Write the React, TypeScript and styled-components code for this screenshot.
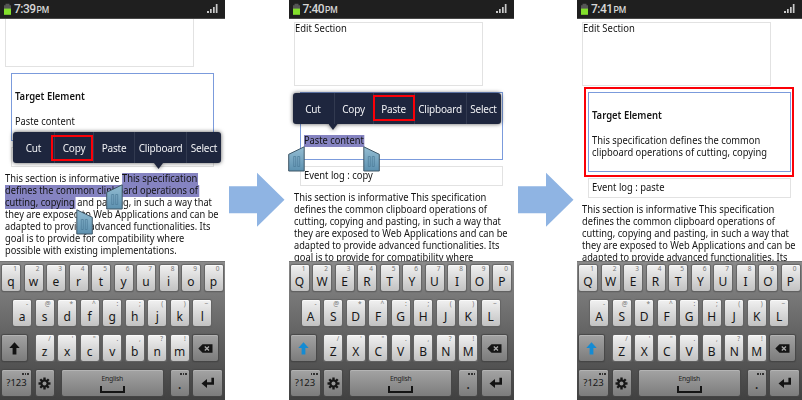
import React from 'react';
import styled, { createGlobalStyle, css } from 'styled-components';

const GlobalStyle = createGlobalStyle`
  * { box-sizing: border-box; }
  body {
    margin: 0;
    background: #fff;
    overflow: hidden;
    font-family: "Noto Sans", "Open Sans", sans-serif;
  }
`;

const Board = styled.main`
  display: flex;
  justify-content: space-between;
  width: 802px;
  height: 400px;
`;

const PhoneFrame = styled.section`
  position: relative;
  display: flex;
  flex-direction: column;
  width: 225px;
  height: 400px;
  flex: none;
`;

const StatusBar = styled.header`
  display: flex;
  align-items: center;
  height: 19px;
  flex: none;
  padding: 0 7px 0 4px;
  background: #1f1f1f;
  border-bottom: 1px solid #484848;
`;

const Clock = styled.span`
  display: flex;
  align-items: baseline;
  margin-left: 3px;
  color: #d6d6d6;
  font: 500 12px/16px "Roboto", sans-serif;
  letter-spacing: -0.55px;
  flex: 1;
  small {
    font-size: 8.5px;
    line-height: 12px;
    letter-spacing: 0;
    margin-left: 1px;
  }
`;

const Page = styled.div`
  height: 242px;
  flex: none;
  overflow: hidden;
  background: #fff;
  font-size: 10px;
  line-height: 11.9px;
  color: #141414;
`;

const PageFlow = styled.div<{ $scroll: number }>`
  display: flex;
  flex-direction: column;
  gap: 6px;
  padding: 3px 0 0 5px;
  margin-top: ${(p) => -p.$scroll}px;
`;

const Line = styled.div<{ $bold?: boolean; $stretch?: number }>`
  width: max-content;
  white-space: pre;
  transform: scaleX(${(p) => p.$stretch ?? 0.928});
  transform-origin: 0 50%;
  font-weight: ${(p) => (p.$bold ? 600 : 400)};
`;

const Marked = styled.span`
  display: inline-block;
  height: 12px;
  padding-right: 1px;
  margin-right: -1px;
  vertical-align: top;
  background: #8583c1;
`;

const EditBox = styled.div`
  width: 189px;
  height: 64px;
  border: 1px solid #e2e2e2;
`;

const TargetBox = styled.div<{ $height: number }>`
  width: 203px;
  height: ${(p) => p.$height}px;
  margin-left: 6px;
  padding: 17px 0 0 3px;
  border: 1px solid #7b9bdc;
`;

const TargetBody = styled.div`
  margin-top: 13px;
`;

const LogBox = styled.div`
  width: 203px;
  height: 20px;
  margin-left: 6px;
  padding: 3px 0 0 3px;
  border: 1px solid #e2e2e2;
`;

const MenuWrap = styled.div<{ $x: number; $y: number }>`
  position: absolute;
  left: ${(p) => p.$x}px;
  top: ${(p) => p.$y}px;
  filter: drop-shadow(0 0 2px rgba(0, 0, 0, 0.65));
`;

const Menu = styled.div`
  display: flex;
  width: 208px;
  height: 31px;
  border-radius: 3px;
  background: #1e263e;
`;

const MenuItem = styled.div<{ $width: number }>`
  display: flex;
  justify-content: center;
  align-items: center;
  width: ${(p) => p.$width}px;
  flex: none;
  color: #f0f1f4;
  font-size: 10px;
  line-height: 14px;
  letter-spacing: -0.2px;
  & + & { border-left: 1px solid #323a50; }
`;

const MenuTip = styled.i<{ $x: number }>`
  display: block;
  width: 9px;
  height: 6px;
  margin-left: ${(p) => p.$x}px;
  background: #1e263e;
  clip-path: polygon(0 0, 100% 0, 50% 100%);
`;

const RedFrame = styled.div<{ $x: number; $y: number; $w: number; $h: number }>`
  position: absolute;
  left: ${(p) => p.$x}px;
  top: ${(p) => p.$y}px;
  width: ${(p) => p.$w}px;
  height: ${(p) => p.$h}px;
  border: 2px solid #fb0007;
`;

const HandleSvg = styled.svg<{ $x: number; $y: number; $flip?: boolean }>`
  position: absolute;
  left: ${(p) => p.$x}px;
  top: ${(p) => p.$y}px;
  transform: ${(p) => (p.$flip ? 'scaleX(-1)' : 'none')};
`;

const ArrowSvg = styled.svg`
  flex: none;
  margin: 172px 3px 0 4px;
`;

const Keyboard = styled.div`
  display: flex;
  flex-direction: column;
  gap: 9px;
  height: 139px;
  padding: 3px 2px 0;
  border-top: 1px solid #747474;
  background: linear-gradient(#8b8b8b, #666 48%, #414141);
`;

const KeyRow = styled.div<{ $indent?: number }>`
  display: flex;
  padding-left: ${(p) => p.$indent ?? 0}px;
`;

const KeyCap = styled.div<{ $width?: number; $gap?: number; $dark?: boolean }>`
  position: relative;
  display: flex;
  align-items: center;
  justify-content: center;
  width: ${(p) => p.$width ?? 18}px;
  height: 26px;
  flex: none;
  margin-right: ${(p) => p.$gap ?? 4.5}px;
  border-radius: 2px;
  color: #171717;
  ${(p) =>
    p.$dark
      ? css`
          background: linear-gradient(#a3a3a3, #7c7c7c);
          box-shadow: 0 0 1px 0.5px #484848, 0 1px 1px #333, inset 0 1px 0 #b4b4b4;
        `
      : css`
          background: linear-gradient(#f1f1f1, #c2c2c2);
          box-shadow: 0 0 1px 0.5px #646464, 0 1px 1px #454545, inset 0 1px 0 #fafafa;
        `}
`;

const Glyph = styled.span<{ $size?: number; $drop?: number }>`
  font-size: ${(p) => p.$size ?? 12}px;
  line-height: 14px;
  padding-top: ${(p) => p.$drop ?? 7}px;
`;

const Hint = styled.span`
  position: absolute;
  top: 0;
  right: 3px;
  font-size: 6.5px;
  line-height: 8px;
  color: #777;
`;

const Dots = styled.span`
  position: absolute;
  top: 3px;
  right: 2px;
  display: flex;
  gap: 1px;
  i { width: 1.6px; height: 1.5px; background: #303030; }
`;

const SpaceFace = styled.div`
  display: flex;
  flex-direction: column;
  align-items: center;
  font-size: 6.8px;
  line-height: 8px;
  letter-spacing: -0.25px;
  color: #252525;
  gap: 3px;
  padding-top: 1px;
`;

const SpaceMark = styled.i`
  width: 25px;
  height: 7px;
  border: 2px solid #141414;
  border-top: 0;
`;

const Battery = () => (
  <svg width="7" height="13" viewBox="0 0 7 13">
    <path d="M1.5 .7h4v1.6H7v4H0v-4h1.5z" fill="#555" />
    <rect y="5.6" width="7" height="6.2" fill="#83e02c" />
  </svg>
);

const Signal = () => (
  <svg width="11" height="10" viewBox="0 0 11 10">
    <g fill="#c9c9c9">
      <rect x="0" y="7" width="2" height="2" />
      <rect x="3" y="5" width="1.7" height="4" />
      <rect x="6" y="3" width="1.7" height="6" />
      <rect x="8.8" y="0" width="1.7" height="9" />
    </g>
  </svg>
);

const ShiftIcon = ({ active }: { active: boolean }) => (
  <svg width="11" height="13" viewBox="0 0 11 13">
    <path d="M5.5 .3 10.7 6H7.4v6.5H3.6V6H.3z" fill={active ? '#148bd3' : '#131313'} />
  </svg>
);

const DeleteIcon = () => (
  <svg width="15" height="9" viewBox="0 0 15 9">
    <path d="M.3 4.5 4.5.3H14.5V8.7H4.5z" fill="#151515" />
    <path d="m6.8 2.5 4.2 4m0-4-4.2 4" stroke="#aaa" strokeWidth="1.3" />
  </svg>
);

const GearIcon = () => (
  <svg width="13" height="13" viewBox="-6.5 -6.5 13 13">
    {[0, 45, 90, 135].map((a) => (
      <rect key={a} x="-1.2" y="-6" width="2.4" height="12" transform={`rotate(${a})`} fill="#171717" />
    ))}
    <circle r="4.1" fill="#171717" />
    <circle r="2" fill="#969696" />
  </svg>
);

const EnterIcon = () => (
  <svg width="14" height="12" viewBox="0 0 14 12">
    <path d="M10.4.8H13v7H6v3.1L.5 6.5 6 2.1v3.2h4.4z" fill="#131313" />
  </svg>
);

const Handle = ({ x, y, flip }: { x: number; y: number; flip?: boolean }) => (
  <HandleSvg $x={x} $y={y} $flip={flip} width="17" height="26" viewBox="0 0 17 26">
    <defs>
      <linearGradient id="handle" x1="0" y1="0" x2="0" y2="1">
        <stop offset="0" stopColor="#94bdd3" />
        <stop offset="1" stopColor="#5d91b0" />
      </linearGradient>
    </defs>
    <path d="M.7 8.3 16.2.8V25H.7z" fill="url(#handle)" stroke="#3f5666" />
    <path d="M5.7 10.5h2v10h-2zM9.7 10.5h2v10h-2z" fill="none" stroke="#4c7b98" strokeWidth=".7" />
  </HandleSvg>
);

const StepArrow = () => (
  <ArrowSvg width="56" height="56" viewBox="0 0 56 56">
    <path d="M0 14.2h28V.8l27.5 27L28 54.8V41.2H0z" fill="#8fb4e3" />
  </ArrowSvg>
);

type Letter = [string, string];
const zip = (letters: string, hints: string): Letter[] =>
  letters.split('').map((l, i) => [l, hints[i]]);

const ROW_TOP = zip('qwertyuiop', '1234567890');
const ROW_MID = zip('asdfghjkl', '-@*^:;()~');
const ROW_LOW = zip('zxcvbnm', "/'\".,?!");

const Letters = ({ row, upper }: { row: Letter[]; upper: boolean }) => (
  <>
    {row.map(([letter, hint]) => (
      <KeyCap key={letter}>
        <Hint>{hint}</Hint>
        <Glyph>{upper ? letter.toUpperCase() : letter}</Glyph>
      </KeyCap>
    ))}
  </>
);

const MoreDots = () => (
  <Dots>
    <i />
    <i />
    <i />
  </Dots>
);

const Keys = ({ upper }: { upper: boolean }) => (
  <Keyboard>
    <KeyRow>
      <Letters row={ROW_TOP} upper={upper} />
    </KeyRow>
    <KeyRow $indent={11.2}>
      <Letters row={ROW_MID} upper={upper} />
    </KeyRow>
    <KeyRow>
      <KeyCap $dark $width={25} $gap={8.7}>
        <ShiftIcon active={upper} />
      </KeyCap>
      <Letters row={ROW_LOW} upper={upper} />
      <KeyCap $dark $width={25} $gap={0}>
        <DeleteIcon />
      </KeyCap>
    </KeyRow>
    <KeyRow>
      <KeyCap $dark $width={29} $gap={4.7}>
        <MoreDots />
        <Glyph $size={9.5} $drop={0}>?123</Glyph>
      </KeyCap>
      <KeyCap $dark $gap={8}>
        <GearIcon />
      </KeyCap>
      <KeyCap $dark $width={101} $gap={8}>
        <SpaceFace>
          English
          <SpaceMark />
        </SpaceFace>
      </KeyCap>
      <KeyCap $dark>
        <MoreDots />
        <Glyph $size={14} $drop={2}>.</Glyph>
      </KeyCap>
      <KeyCap $dark $width={29} $gap={0}>
        <EnterIcon />
      </KeyCap>
    </KeyRow>
  </Keyboard>
);

const MENU: [string, number][] = [
  ['Cut', 41],
  ['Copy', 39],
  ['Paste', 41],
  ['Clipboard', 52],
  ['Select', 35],
];

const EditMenu = ({ x, y, tip }: { x: number; y: number; tip: number }) => (
  <MenuWrap $x={x} $y={y}>
    <Menu>
      {MENU.map(([label, width]) => (
        <MenuItem key={label} $width={width}>
          {label}
        </MenuItem>
      ))}
    </Menu>
    <MenuTip $x={tip} />
  </MenuWrap>
);

interface PhoneProps {
  time: string;
  scroll?: number;
  upper?: boolean;
  targetHeight?: number;
  target: React.ReactNode;
  log?: string;
  selected?: boolean;
  children?: React.ReactNode;
}

const Phone = ({ time, scroll = 0, upper = true, targetHeight = 68, target, log, selected, children }: PhoneProps) => {
  const mark = (text: string) => (selected ? <Marked>{text}</Marked> : text);
  return (
    <PhoneFrame>
      <StatusBar>
        <Battery />
        <Clock>
          {time}
          <small>PM</small>
        </Clock>
        <Signal />
      </StatusBar>
      <Page>
        <PageFlow $scroll={scroll}>
          <EditBox>
            <Line $stretch={0.945}>Edit Section</Line>
          </EditBox>
          <TargetBox $height={targetHeight}>
            <Line $bold $stretch={0.945}>Target Element</Line>
            <TargetBody>{target}</TargetBody>
          </TargetBox>
          {log ? (
            <LogBox>
              <Line $stretch={0.94}>{log}</Line>
            </LogBox>
          ) : (
            <LogBox />
          )}
          <div>
            <Line $stretch={0.937}>This section is informative {mark('This specification')}</Line>
            <Line $stretch={0.925}>{mark('defines the common clipboard operations of')}</Line>
            <Line>{mark('cutting, copying')} and pasting, in such a way that</Line>
            <Line>they are exposed to Web Applications and can be</Line>
            <Line $stretch={0.921}>adapted to provide advanced functionalities. Its</Line>
            <Line $stretch={0.934}>goal is to provide for compatibility where</Line>
            <Line $stretch={0.923}>possible with existing implementations.</Line>
          </div>
        </PageFlow>
      </Page>
      <Keys upper={upper} />
      {children}
    </PhoneFrame>
  );
};

export default function App() {
  return (
    <>
      <GlobalStyle />
      <Board>
        <Phone time="7:39" scroll={19} upper={false} selected target={<Line>Paste content</Line>}>
          <EditMenu x={13} y={132} tip={141} />
          <RedFrame $x={51} $y={135} $w={42} $h={26} />
          <Handle x={106} y={184} />
          <Handle x={75.5} y={208.5} flip />
        </Phone>
        <StepArrow />
        <Phone time="7:40" target={<Line><Marked>Paste content</Marked></Line>} log="Event log : copy">
          <EditMenu x={4} y={93} tip={36} />
          <RedFrame $x={84} $y={95} $w={42} $h={26} />
          <Handle x={-0.5} y={145.5} />
          <Handle x={74} y={145.5} flip />
        </Phone>
        <StepArrow />
        <Phone
          time="7:41"
          targetHeight={80}
          log="Event log : paste"
          target={
            <>
              <Line $stretch={0.935}>This specification defines the common</Line>
              <Line $stretch={0.935}>clipboard operations of cutting, copying</Line>
            </>
          }
        >
          <RedFrame $x={7} $y={87} $w={210} $h={90} />
        </Phone>
      </Board>
    </>
  );
}
